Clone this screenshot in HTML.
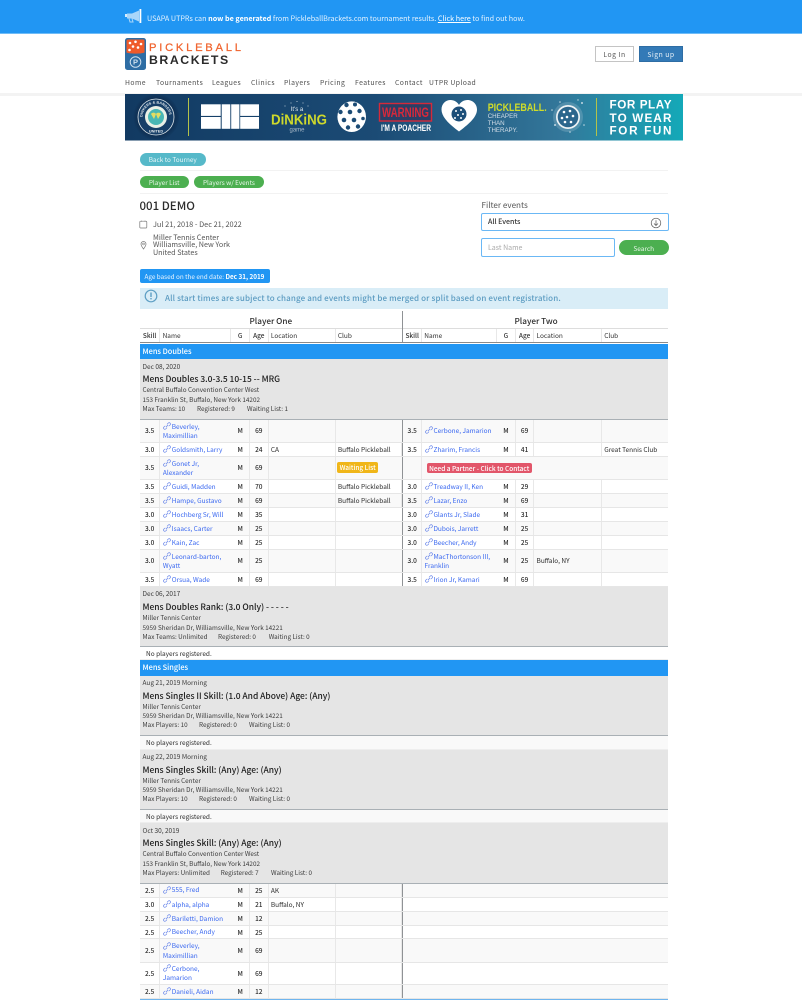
<!DOCTYPE html>
<html lang="en"><head><meta charset="utf-8"><title>001 DEMO</title>
<style>
html,body{margin:0;padding:0;width:802px;height:1000px;overflow:hidden;background:#fff}
body{position:relative;font-family:"Noto Sans CJK JP","Liberation Sans",sans-serif;font-size:6.5px;color:#2c2c2c;line-height:9px;filter:blur(.25px)}
.a{position:absolute;white-space:nowrap}
.p{position:absolute;border-radius:8px;color:#fff;text-align:center;white-space:nowrap}
.hr{position:absolute;left:140px;width:528px;height:1px;background:#f2f2f2}
.nav{position:absolute;top:76.5px;font-size:6.8px;line-height:10px;letter-spacing:.45px;color:#4c4c4c;white-space:nowrap}
.bl{position:absolute;left:140px;width:528px;background:#2196f3;color:#fff;font-size:7.4px;font-weight:500;padding-left:2.5px;box-sizing:border-box;height:15.5px;line-height:16.5px}
.g{position:absolute;left:140px;width:528px;height:60px;background:#e5e5e5;border-bottom:1.5px solid #a9b0b5;box-sizing:border-box}
.g div{position:absolute;white-space:nowrap;left:2.5px}
.g .d{top:2.8px;color:#3c3c3c}.g .t{top:15.2px;font-size:8.45px;font-weight:500;color:#1c1c1c;line-height:11px}
.g .v{top:26.2px;color:#3c3c3c;font-size:6.35px}.g .s{top:35.9px;color:#3c3c3c;font-size:6.35px}.g .m{top:44.9px;color:#3c3c3c;font-size:6.35px}
.np{position:absolute;left:140px;width:528px;height:13.5px;line-height:13.5px;padding-left:6px;box-sizing:border-box;background:#fff;border-bottom:1px solid #eee;color:#2c2c2c}
.r{position:absolute;left:140px;width:528px;display:grid;grid-template-columns:20.3px 71px 18.7px 18.6px 67px 66.2px 1.7px 18.5px 75px 19px 18.3px 67.7px 66.2px;border-bottom:1px solid #e6e6e6;box-sizing:border-box;background:#fff}
.r.o{background:#f9f9f9}
.r>*{display:flex;align-items:center;border-right:1px solid #e8e8e8;box-sizing:border-box;min-width:0;font-style:normal;font-weight:400;text-decoration:none}
.r>i{justify-content:center;font-weight:500}
.r>em{padding-left:2.3px}
.r>b{display:block;align-self:center;border:0;padding-left:2.6px;color:#3a68f0;line-height:9.2px;height:auto}
.r>u{background:#8f9295;border:0}
.r>s{border-right:0}
.l{display:inline-block;width:8px;height:8px;vertical-align:-1.2px;margin-right:.9px}
</style></head><body>
<svg width="0" height="0" style="position:absolute"><defs>
<symbol id="l" viewBox="0 0 12 12"><g fill="none" stroke="#6e8aea" stroke-width="1.1"><path d="M4.6 7.400 L7.400 4.600"/><path d="M6 3.500 L8 1.500 a2 2 0 0 1 2.800 2.800 L8.500 6.200"/><path d="M6 8.500 L4 10.500 a2 2 0 0 1-2.800-2.800 L3.500 5.800"/></g></symbol>
</defs></svg>

<div style="position:absolute;left:0;top:0;width:802px;height:33px;background:#2196f3;border-bottom:1px solid #6fbcf7"></div>
<svg class="a" style="left:124px;top:8px" width="20" height="17" viewBox="0 0 20 17"><path d="M1 6h2v3H1z" fill="#d7ecfd"/><path d="M3 5.500h5L15 2.500v11L8 10.500H3z" fill="#a9d6fa"/><rect x="15.500" y="1" width="1.800" height="14" fill="#fff"/><path d="M5 10.500l1 3.500h3l-1-3.500" fill="none" stroke="#a9d6fa"/></svg>
<div class="a" style="left:147px;top:14px;font-size:7.2px;line-height:11px;color:#e4f2fe">USAPA UTPRs can <span style="font-weight:700;color:#fff">now be generated</span> from PickleballBrackets.com tournament results. <span style="text-decoration:underline;color:#fff">Click here</span> to find out how.</div>

<svg class="a" style="left:125px;top:38px" width="21" height="32" viewBox="0 0 21 32"><rect width="21" height="32" rx="2.500" fill="#2e6da4"/><path d="M1.500 3a1.500 1.500 0 0 1 1.500-1.500h15a1.500 1.500 0 0 1 1.500 1.500v11.500c-3 1.500-15 1.500-18 0z" fill="#ef5a2a"/><g fill="#fff"><circle cx="5" cy="5" r="1.300"/><circle cx="10.500" cy="3.800" r="1.300"/><circle cx="16" cy="6" r="1.300"/><circle cx="8" cy="8.500" r="1.300"/><circle cx="13" cy="9.500" r="1.300"/><circle cx="4.500" cy="12" r="1.300"/></g><circle cx="10.500" cy="24" r="5.300" fill="none" stroke="#cfe0ee" stroke-width="1"/><text x="10.500" y="26.700" font-size="7.500" font-weight="700" fill="#cfe0ee" text-anchor="middle" font-family="Liberation Sans">P</text></svg>
<div class="a" style="left:149px;top:41.5px;font:400 11.2px/13px 'Liberation Sans',sans-serif;-webkit-text-stroke:.25px #f0642f;letter-spacing:2.75px;color:#f0642f">PICKLEBALL</div>
<div class="a" style="left:149px;top:53.5px;font:700 12.3px/13px 'Liberation Sans',sans-serif;letter-spacing:1.55px;color:#2a2a2a">BRACKETS</div>
<div class="a" style="left:595px;top:46px;width:39px;height:16px;box-sizing:border-box;border:1px solid #c4c4c4;text-align:center;font-size:6.8px;line-height:15px;letter-spacing:.5px;color:#555">Log In</div>
<div class="a" style="left:639px;top:46px;width:44px;height:16px;box-sizing:border-box;background:#337ab7;border:1px solid #2e6da4;text-align:center;font-size:6.8px;line-height:15px;letter-spacing:.5px;color:#e8f1f8">Sign up</div>
<span class="nav" style="left:125px">Home</span><span class="nav" style="left:156px">Tournaments</span><span class="nav" style="left:212px">Leagues</span><span class="nav" style="left:251px">Clinics</span><span class="nav" style="left:284px">Players</span><span class="nav" style="left:320px">Pricing</span><span class="nav" style="left:355px">Features</span><span class="nav" style="left:395px">Contact</span><span class="nav" style="left:429px">UTPR Upload</span>
<div style="position:absolute;left:0;top:93px;width:802px;height:3px;background:#f3f3f3"></div>

<svg class="a" style="left:125px;top:94px" width="558" height="47" viewBox="125 94 558 47">
<defs><linearGradient id="bg" x1="0" x2="1"><stop offset="0" stop-color="#123a62"/><stop offset=".45" stop-color="#1b4b75"/><stop offset=".78" stop-color="#33779a"/><stop offset="1" stop-color="#14a9b8"/></linearGradient>
<radialGradient id="gl"><stop offset=".6" stop-color="#0b2443"/><stop offset="1" stop-color="#123a62"/></radialGradient>
<path id="arc" d="M142.500 117a13.500 13.500 0 0 1 27 0"/></defs>
<rect x="125" y="94" width="558" height="46.500" fill="url(#bg)"/>
<circle cx="156" cy="117" r="23" fill="url(#gl)"/>
<circle cx="156" cy="117" r="18" fill="#173f68" stroke="#dfe7ea" stroke-width=".8"/>
<text font-size="3.600" font-weight="700" fill="#e6ecef" font-family="Liberation Sans"><textPath href="#arc" textLength="40">DINKERS &amp; BANGERS</textPath></text>
<circle cx="156" cy="117" r="11" fill="#eaf0e6"/><circle cx="156" cy="117" r="8" fill="#49b7b4"/><path d="M151 114a3 3 0 0 1 5 0l-2 5zM161 114a3 3 0 0 0-5 0l2 5z" fill="#e3dd62"/>
<text x="156" y="132.500" font-size="3.800" font-weight="700" fill="#e6ecef" text-anchor="middle" font-family="Liberation Sans">UNITED</text>
<rect x="188" y="98" width="1" height="38" fill="#b3c24a"/>
<g fill="#fff"><rect x="201" y="104.300" width="19.700" height="11.600"/><rect x="201" y="117" width="19.700" height="11.800"/><rect x="221.700" y="104.300" width="8.600" height="24.500"/><rect x="231.200" y="104.300" width="8.200" height="24.500"/><rect x="240.200" y="104.300" width="18.800" height="11.600"/><rect x="240.200" y="117" width="18.800" height="11.800"/></g>
<text x="297" y="111" font-size="6" fill="#e3ebf0" text-anchor="middle" font-family="Liberation Sans">It's a</text>
<g fill="#dfe8ee"><circle cx="285" cy="106" r=".5"/><circle cx="291" cy="103" r=".5"/><circle cx="297" cy="101.500" r=".5"/><circle cx="303" cy="103" r=".5"/><circle cx="308" cy="106" r=".5"/></g>
<text x="271" y="124.500" font-size="14.500" font-weight="700" fill="#ced92c" font-family="Liberation Sans" textLength="56" lengthAdjust="spacingAndGlyphs">DiNKiNG</text>
<text x="297" y="131.500" font-size="6" fill="#a9bac8" text-anchor="middle" font-family="Liberation Sans">game</text>
<ellipse cx="351.700" cy="116.700" rx="14.300" ry="15.300" fill="#fff"/>
<g fill="#1b4b75"><circle cx="346.500" cy="105" r="2.200"/><circle cx="355" cy="104.500" r="2"/><circle cx="340.500" cy="112" r="2.200"/><circle cx="350" cy="112" r="2.300"/><circle cx="359.500" cy="111" r="2.200"/><circle cx="344" cy="120" r="2.300"/><circle cx="354" cy="120" r="2.300"/><circle cx="363" cy="118.500" r="1.800"/><circle cx="348" cy="127.500" r="2.200"/><circle cx="358" cy="126.500" r="2.200"/></g>
<rect x="379.500" y="103.500" width="52" height="17.500" fill="#2a3f66" stroke="#d42a3a" stroke-width="1.400"/>
<text x="382" y="117" font-size="13.500" font-weight="700" fill="#d8283a" font-family="Liberation Sans" textLength="47" lengthAdjust="spacingAndGlyphs">WARNING</text>
<text x="381" y="131" font-size="9.500" font-weight="700" fill="#fff" font-family="Liberation Sans" textLength="50" lengthAdjust="spacingAndGlyphs">I'M A POACHER</text>
<path d="M459 131.500C449 124 441.500 117 441.500 109.500C441.500 103.500 446 100 450.500 100C454 100 457.500 102 459 105C460.500 102 464 100 467.500 100C472 100 477 103.500 477 109.500C477 117 469 124 459 131.500Z" fill="#fff"/>
<circle cx="459" cy="114" r="7.500" fill="#1d4f79"/><g fill="#fff"><circle cx="456" cy="111" r="1"/><circle cx="461" cy="110" r="1"/><circle cx="463" cy="114" r="1"/><circle cx="458" cy="115" r="1"/><circle cx="455" cy="118" r="1"/><circle cx="461" cy="118" r="1"/></g>
<text x="487.700" y="111" font-size="11" font-weight="700" fill="#cfdc2a" font-family="Liberation Sans" textLength="59" lengthAdjust="spacingAndGlyphs">PICKLEBALL.</text>
<g font-size="6.800" fill="#d3dee8" font-family="Liberation Sans"><text x="487.700" y="118" textLength="30" lengthAdjust="spacingAndGlyphs">CHEAPER</text><text x="487.700" y="125" textLength="17" lengthAdjust="spacingAndGlyphs">THAN</text><text x="487.700" y="132" textLength="30" lengthAdjust="spacingAndGlyphs">THERAPY.</text></g>
<circle cx="568" cy="117" r="15" fill="#9fc0d0" opacity=".3"/>
<g fill="#e6eef2" opacity=".8"><circle cx="552" cy="110" r=".8"/><circle cx="555" cy="125" r="1"/><circle cx="582" cy="103" r="1"/><circle cx="584" cy="125" r=".8"/><circle cx="578" cy="100" r=".7"/><circle cx="560" cy="102" r=".8"/><circle cx="570" cy="132" r=".8"/></g>
<circle cx="568" cy="117" r="12" fill="#eef3f5"/><circle cx="568" cy="117" r="10.300" fill="#2c668c"/>
<g fill="#fff"><circle cx="564" cy="112" r="1.300"/><circle cx="570" cy="111" r="1.300"/><circle cx="573" cy="116" r="1.300"/><circle cx="567" cy="117" r="1.300"/><circle cx="562" cy="118" r="1.300"/><circle cx="565" cy="122" r="1.300"/><circle cx="571" cy="122" r="1.300"/></g>
<rect x="596" y="98" width="1" height="38" fill="#b3c24a"/>
<g font-size="11.700" font-weight="700" fill="#fff" font-family="Liberation Sans"><text x="609.500" y="108.700" textLength="62">FOR PLAY</text><text x="609.500" y="122" textLength="62">TO WEAR</text><text x="609.500" y="134.700" textLength="62">FOR FUN</text></g>
</svg>

<div class="p" style="left:139.500px;top:152.500px;width:66.500px;height:13px;line-height:13.5px;background:#56b9c9;color:#e8f6f8;font-size:6.4px">Back to Tourney</div>
<div class="hr" style="top:170px"></div>
<div class="p" style="left:139.500px;top:175.700px;width:49.500px;height:12.500px;line-height:13px;background:#4caf50;color:#e8f6e9;font-size:6.4px">Player List</div>
<div class="p" style="left:193.700px;top:175.700px;width:70.500px;height:12.500px;line-height:13px;background:#4caf50;color:#e8f6e9;font-size:6.4px">Players w/ Events</div>
<div class="hr" style="top:193px"></div>
<div class="a" style="left:139.500px;top:199px;font-size:11.500px;line-height:14px;font-weight:500;color:#2c2c2c">001 DEMO</div>
<svg class="a" style="left:139px;top:220px" width="9" height="9" viewBox="0 0 9 9"><rect x=".8" y="1.200" width="7" height="6.800" rx=".8" fill="none" stroke="#777" stroke-width=".7"/><path d="M2.500 .6v1.200M6 .6v1.200" stroke="#777" stroke-width=".6"/></svg>
<div class="a" style="left:153px;top:219.7px;font-size:7.35px;line-height:10px;color:#555">Jul 21, 2018 - Dec 21, 2022</div>
<svg class="a" style="left:140px;top:239.500px" width="7" height="10" viewBox="0 0 7 10"><path d="M3.500 9C2 7 1 5.500 1 4a2.500 2.500 0 0 1 5 0C6 5.500 5 7 3.500 9Z" fill="none" stroke="#777" stroke-width=".7"/><circle cx="3.500" cy="4" r=".9" fill="none" stroke="#777" stroke-width=".6"/></svg>
<div class="a" style="left:153px;top:234.5px;font-size:7.2px;line-height:7.6px;color:#555">Miller Tennis Center<br>Williamsville, New York<br>United States</div>
<div class="a" style="left:139.500px;top:268.500px;width:130px;height:14.500px;line-height:15px;background:#2196f3;border-radius:2px;color:#e6f3fe;padding-left:5px;box-sizing:border-box;font-size:6.35px">Age based on the end date: <span style="font-weight:700;color:#fff">Dec 31, 2019</span></div>
<div class="a" style="left:139.500px;top:288px;width:528.500px;height:21px;background:#d9edf7"></div>
<svg class="a" style="left:144px;top:289px" width="14" height="14" viewBox="0 0 14 14"><circle cx="7" cy="7" r="5.800" fill="none" stroke="#5e9fc4" stroke-width="1.200"/><rect x="6.300" y="3.500" width="1.400" height="4.500" fill="#5e9fc4"/><rect x="6.300" y="9" width="1.400" height="1.400" fill="#5e9fc4"/></svg>
<div class="a" style="left:165px;top:293px;font-size:8px;line-height:11px;font-weight:500;letter-spacing:.13px;color:#5b9bc1">All start times are subject to change and events might be merged or split based on event registration.</div>

<div class="a" style="left:481.500px;top:199.500px;font-size:8.100px;line-height:11px;color:#555">Filter events</div>
<div class="a" style="left:481px;top:213px;width:187.500px;height:18px;box-sizing:border-box;border:1.200px solid #6bb8f5;border-radius:2px;font-size:7px;line-height:17.500px;padding-left:6px;color:#333;font-weight:500">All Events</div>
<svg class="a" style="left:650px;top:216.500px" width="12" height="12" viewBox="0 0 12 12"><circle cx="6" cy="6" r="4.800" fill="none" stroke="#555" stroke-width=".7"/><path d="M6 3.300v5M4 6.500l2 2 2-2" fill="none" stroke="#555" stroke-width=".7"/></svg>
<div class="a" style="left:481px;top:238px;width:133.500px;height:19px;box-sizing:border-box;border:1.200px solid #6bb8f5;border-radius:2px;font-size:7px;line-height:18.500px;padding-left:6px;color:#aaa">Last Name</div>
<div class="p" style="left:619px;top:239.500px;width:49.500px;height:15.500px;line-height:16px;background:#4caf50;color:#e8f6e9">Search</div>

<div class="a" style="left:140px;top:311px;width:528px;height:18px;border-bottom:1px solid #ddd;box-sizing:border-box;font-size:8.200px;font-weight:500;line-height:20.500px;color:#2c2c2c"><span style="position:absolute;left:109.500px">Player One</span><span style="position:absolute;left:374.500px">Player Two</span></div>

<div class="r" style="top:329px;height:14px;border-bottom:1px solid #8a8a8a;font-weight:500;color:#333"><i>Skill</i><em>Name</em><i>G</i><i>Age</i><em>Location</em><s><em style="padding-left:2.300px;font-style:normal">Club</em></s><u></u><i>Skill</i><em>Name</em><i>G</i><i>Age</i><em>Location</em><s><em style="padding-left:2.300px;font-style:normal">Club</em></s></div>
<div style="position:absolute;left:401.500px;top:311px;width:1.700px;height:18px;background:#8f9295"></div>

<div class="bl" style="top:343.500px">Mens Doubles</div>
<div class="g" style="top:359px;height:60.500px"><div class="d">Dec 08, 2020</div><div class="t">Mens Doubles 3.0-3.5 10-15 -- MRG</div><div class="v">Central Buffalo Convention Center West</div><div class="s">153 Franklin St, Buffalo, New York 14202</div><div class="m">Max Teams: 10</div><div class="m" style="left:57px">Registered: 9</div><div class="m" style="left:107px">Waiting List: 1</div></div>

<div class="r o" style="top:419.500px;height:23.500px"><i>3.5</i><b><svg class="l"><use href="#l"/></svg>Beverley,<br>Maximillian</b><i>M</i><i>69</i><em></em><s></s><u></u><i>3.5</i><b><svg class="l"><use href="#l"/></svg>Cerbone, Jamarion</b><i>M</i><i>69</i><em></em><s></s></div>
<div class="r" style="top:443px;height:13.700px"><i>3.0</i><b><svg class="l"><use href="#l"/></svg>Goldsmith, Larry</b><i>M</i><i>24</i><em>CA</em><em>Buffalo Pickleball</em><u></u><i>3.5</i><b><svg class="l"><use href="#l"/></svg>Zharim, Francis</b><i>M</i><i>41</i><em></em><em style="border:0">Great Tennis Club</em></div>
<div class="r o" style="top:456.500px;height:23.500px"><i>3.5</i><b><svg class="l"><use href="#l"/></svg>Gonet Jr,<br>Alexander</b><i>M</i><i>69</i><em></em><s></s><u></u><i></i><s style="grid-column:span 5"></s></div>
<div class="r" style="top:480px;height:14px"><i>3.5</i><b><svg class="l"><use href="#l"/></svg>Guidi, Madden</b><i>M</i><i>70</i><em></em><em>Buffalo Pickleball</em><u></u><i>3.0</i><b><svg class="l"><use href="#l"/></svg>Treadway II, Ken</b><i>M</i><i>29</i><em></em><s></s></div>
<div class="r o" style="top:494px;height:14px"><i>3.5</i><b><svg class="l"><use href="#l"/></svg>Hampe, Gustavo</b><i>M</i><i>69</i><em></em><em>Buffalo Pickleball</em><u></u><i>3.5</i><b><svg class="l"><use href="#l"/></svg>Lazar, Enzo</b><i>M</i><i>69</i><em></em><s></s></div>
<div class="r" style="top:508px;height:14px"><i>3.0</i><b><svg class="l"><use href="#l"/></svg>Hochberg Sr, Will</b><i>M</i><i>35</i><em></em><s></s><u></u><i>3.0</i><b><svg class="l"><use href="#l"/></svg>Glants Jr, Slade</b><i>M</i><i>31</i><em></em><s></s></div>
<div class="r o" style="top:522px;height:14px"><i>3.0</i><b><svg class="l"><use href="#l"/></svg>Isaacs, Carter</b><i>M</i><i>25</i><em></em><s></s><u></u><i>3.0</i><b><svg class="l"><use href="#l"/></svg>Dubois, Jarrett</b><i>M</i><i>25</i><em></em><s></s></div>
<div class="r" style="top:536px;height:14px"><i>3.0</i><b><svg class="l"><use href="#l"/></svg>Kain, Zac</b><i>M</i><i>25</i><em></em><s></s><u></u><i>3.0</i><b><svg class="l"><use href="#l"/></svg>Beecher, Andy</b><i>M</i><i>25</i><em></em><s></s></div>
<div class="r o" style="top:549.500px;height:23.500px"><i>3.0</i><b><svg class="l"><use href="#l"/></svg>Leonard-barton,<br>Wyatt</b><i>M</i><i>25</i><em></em><s></s><u></u><i>3.0</i><b><svg class="l"><use href="#l"/></svg>MacThortonson III,<br>Franklin</b><i>M</i><i>25</i><em>Buffalo, NY</em><s></s></div>
<div class="r" style="top:573px;height:14px"><i>3.5</i><b><svg class="l"><use href="#l"/></svg>Orsua, Wade</b><i>M</i><i>69</i><em></em><s></s><u></u><i>3.5</i><b><svg class="l"><use href="#l"/></svg>Irion Jr, Kamari</b><i>M</i><i>69</i><em></em><s></s></div>
<div class="p" style="left:337.300px;top:462px;width:40.700px;height:11px;line-height:11.500px;border-radius:2px;background:#f0b619;color:#fff;font-weight:500">Waiting List</div>
<div class="p" style="left:426.700px;top:462.700px;width:105px;height:10.700px;line-height:11.200px;border-radius:2px;background:#e2566a;color:#fff;font-weight:500">Need a Partner - Click to Contact</div>

<div class="g" style="top:586.700px;height:60px"><div class="d">Dec 06, 2017</div><div class="t">Mens Doubles Rank: (3.0 Only) - - - - -</div><div class="v">Miller Tennis Center</div><div class="s">5959 Sheridan Dr, Williamsville, New York 14221</div><div class="m">Max Teams: Unlimited</div><div class="m" style="left:78px">Registered: 0</div><div class="m" style="left:128.700px">Waiting List: 0</div></div>
<div class="np" style="top:646.700px">No players registered.</div>
<div class="bl" style="top:660px">Mens Singles</div>
<div class="g" style="top:675.500px;height:60.500px"><div class="d">Aug 21, 2019 Morning</div><div class="t">Mens Singles II Skill: (1.0 And Above) Age: (Any)</div><div class="v">Miller Tennis Center</div><div class="s">5959 Sheridan Dr, Williamsville, New York 14221</div><div class="m">Max Players: 10</div><div class="m" style="left:59px">Registered: 0</div><div class="m" style="left:109px">Waiting List: 0</div></div>
<div class="np" style="top:736px;background:#f9f9f9">No players registered.</div>
<div class="g" style="top:749.500px;height:60px"><div class="d">Aug 22, 2019 Morning</div><div class="t">Mens Singles Skill: (Any) Age: (Any)</div><div class="v">Miller Tennis Center</div><div class="s">5959 Sheridan Dr, Williamsville, New York 14221</div><div class="m">Max Players: 10</div><div class="m" style="left:59px">Registered: 0</div><div class="m" style="left:109px">Waiting List: 0</div></div>
<div class="np" style="top:809.500px;background:#f9f9f9">No players registered.</div>
<div class="g" style="top:823px;height:60.500px"><div class="d">Oct 30, 2019</div><div class="t">Mens Singles Skill: (Any) Age: (Any)</div><div class="v">Central Buffalo Convention Center West</div><div class="s">153 Franklin St, Buffalo, New York 14202</div><div class="m">Max Players: Unlimited</div><div class="m" style="left:80.700px">Registered: 7</div><div class="m" style="left:131px">Waiting List: 0</div></div>

<div class="r o" style="top:883.500px;height:14.200px"><i>2.5</i><b><svg class="l"><use href="#l"/></svg>555, Fred</b><i>M</i><i>25</i><em>AK</em><em></em><u></u></div>
<div class="r" style="top:897.700px;height:14px"><i>3.0</i><b><svg class="l"><use href="#l"/></svg>alpha, alpha</b><i>M</i><i>21</i><em>Buffalo, NY</em><em></em><u></u></div>
<div class="r o" style="top:911.700px;height:14px"><i>2.5</i><b><svg class="l"><use href="#l"/></svg>Bariletti, Damion</b><i>M</i><i>12</i><em></em><em></em><u></u></div>
<div class="r" style="top:925.700px;height:13.700px"><i>2.5</i><b><svg class="l"><use href="#l"/></svg>Beecher, Andy</b><i>M</i><i>25</i><em></em><em></em><u></u></div>
<div class="r o" style="top:939.300px;height:23.500px"><i>2.5</i><b><svg class="l"><use href="#l"/></svg>Beverley,<br>Maximillian</b><i>M</i><i>69</i><em></em><em></em><u></u></div>
<div class="r" style="top:962.700px;height:22.500px"><i>2.5</i><b><svg class="l"><use href="#l"/></svg>Cerbone,<br>Jamarion</b><i>M</i><i>69</i><em></em><em></em><u></u></div>
<div class="r o" style="top:985px;height:14px"><i>2.5</i><b><svg class="l"><use href="#l"/></svg>Danieli, Aidan</b><i>M</i><i>12</i><em></em><em></em><u></u></div>
<div style="position:absolute;left:140px;top:999px;width:528px;height:1px;background:#6fb5ee"></div>
</body></html>
